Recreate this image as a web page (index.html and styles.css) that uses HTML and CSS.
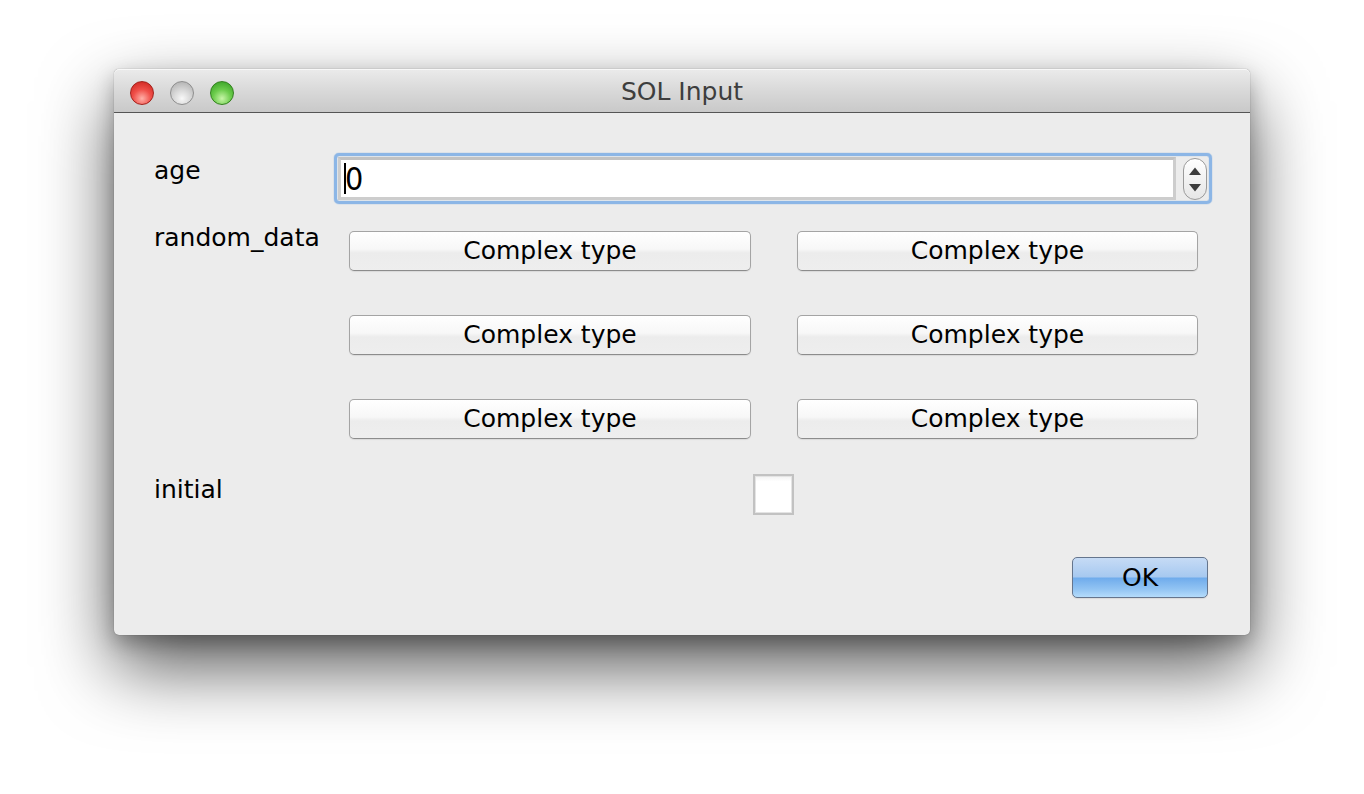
FILE: index.html
```html
<!DOCTYPE html>
<html>
<head>
<meta charset="utf-8">
<title>SOL Input</title>
<link rel="stylesheet" href="styles.css">
</head>
<body>
<div class="window">
  <div class="titlebar">
    <div class="lights">
      <span class="light red"></span>
      <span class="light gray"></span>
      <span class="light green"></span>
    </div>
    <div class="title">SOL Input</div>
  </div>
  <div class="content">
    <div class="row row-age">
      <div class="label label-age">age</div>
      <div class="focus-ring">
        <div class="textbox"><span class="caret"></span><span class="value">0</span></div>
        <div class="spinner">
          <svg width="24" height="42" viewBox="0 0 24 42">
            <path d="M6 17 L12 9.5 L18 17 Z" fill="#3c3c3c"/>
            <path d="M6 26 L12 33.5 L18 26 Z" fill="#3c3c3c"/>
          </svg>
        </div>
      </div>
    </div>
    <div class="row row-random">
      <div class="label">random_data</div>
      <div class="btn-grid">
        <button class="btn">Complex type</button>
        <button class="btn">Complex type</button>
        <button class="btn">Complex type</button>
        <button class="btn">Complex type</button>
        <button class="btn">Complex type</button>
        <button class="btn">Complex type</button>
      </div>
    </div>
    <div class="row row-initial">
      <div class="label label-initial">initial</div>
      <div class="check-area"><span class="checkbox"></span></div>
    </div>
    <div class="row row-ok">
      <button class="btn btn-ok">OK</button>
    </div>
  </div>
</div>
</body>
</html>
```

FILE: styles.css
```css
html, body {
  margin: 0;
  padding: 0;
  background: #ffffff;
}
body {
  width: 1364px;
  height: 794px;
  overflow: hidden;
  padding: 69px 0 0 114px;
  box-sizing: border-box;
  font-family: "DejaVu Sans", "Noto Sans", sans-serif;
}
.window {
  width: 1136px;
  background: #ececec;
  border-radius: 5px;
  box-shadow: 0 32px 72px rgba(0, 0, 0, 0.66), 0 8px 20px rgba(0, 0, 0, 0.25), 0 0 1px rgba(0, 0, 0, 0.5);
  overflow: hidden;
}
.titlebar {
  height: 43px;
  border-bottom: 1px solid #555555;
  background: linear-gradient(#ebebeb, #d9d9d9 50%, #c9c9c9);
  box-shadow: inset 0 1px 0 #f8f8f8;
  display: flex;
  align-items: center;
  position: relative;
  border-radius: 5px 5px 0 0;
}
.lights {
  display: flex;
  gap: 16px;
  margin-left: 16px;
  margin-top: 4px;
}
.light {
  width: 24px;
  height: 24px;
  border-radius: 50%;
  box-sizing: border-box;
}
.red {
  background: radial-gradient(circle at 50% 75%, #ffb0a8 0%, #f0504a 45%, #c81e18 100%);
  border: 1px solid #a2221d;
}
.gray {
  background: radial-gradient(circle at 50% 75%, #f8f8f8 0%, #d6d6d6 45%, #a8a8a8 100%);
  border: 1px solid #8e8e8e;
}
.green {
  background: radial-gradient(circle at 50% 75%, #c8f5a8 0%, #6ccc4c 45%, #2f9a1e 100%);
  border: 1px solid #33801f;
}
.title {
  position: absolute;
  left: 0;
  right: 0;
  top: 8px;
  text-align: center;
  font-size: 25px;
  line-height: 30px;
  color: #3e3e3e;
}
.content {
  padding: 40px 38px 37px 40px;
}
.row {
  display: flex;
  align-items: flex-start;
}
.label {
  width: 180px;
  flex: none;
  font-size: 25px;
  line-height: 30px;
  color: #000;
}
.label-age {
  margin-top: 3px;
}
.focus-ring {
  width: 878px;
  height: 51px;
  box-sizing: border-box;
  border: 3px solid #8cb6e6;
  border-radius: 5px;
  box-shadow: 0 0 1px 0 #4f8fd8, inset 0 0 1px #6aa0de;
  display: flex;
  align-items: center;
}
.textbox {
  flex: 1;
  height: 43px;
  margin-left: 1px;
  box-sizing: border-box;
  background: #ffffff;
  border: 3px solid #cdcdcd;
  border-top-color: #c2c2c2;
  display: flex;
  align-items: center;
  padding-left: 3px;
}
.caret {
  width: 2px;
  height: 31px;
  background: #000;
  flex: none;
}
.value {
  font-family: "DejaVu Sans Condensed", "DejaVu Sans", sans-serif;
  font-size: 32px;
  line-height: 36px;
  color: #000;
  margin-left: -1px;
}
.spinner {
  width: 24px;
  height: 42px;
  margin-left: 7px;
  margin-right: 2px;
  box-sizing: border-box;
  border: 1px solid #9a9a9a;
  border-radius: 12px;
  background: linear-gradient(#ffffff, #f2f2f2 50%, #e6e6e6);
  display: flex;
  align-items: center;
  justify-content: center;
  overflow: hidden;
}
.spinner svg {
  flex: none;
}
.row-random {
  margin-top: 19px;
}
.btn-grid {
  margin-left: 15px;
  margin-top: 8px;
  display: grid;
  grid-template-columns: 402px 401px;
  column-gap: 46px;
  row-gap: 44px;
}
.btn {
  height: 40px;
  margin: 0;
  padding: 0;
  box-sizing: border-box;
  border: 1px solid #a4a4a4;
  border-bottom-color: #8c8c8c;
  border-radius: 5px;
  background: linear-gradient(#ffffff, #f7f7f7 45%, #ececec 55%, #eeeeee);
  box-shadow: 0 1px 1px rgba(0, 0, 0, 0.08);
  font-family: "DejaVu Sans", "Noto Sans", sans-serif;
  font-size: 25px;
  line-height: 30px;
  color: #000;
  text-align: center;
}
.row-initial {
  margin-top: 35px;
}
.label-initial {
  margin-top: 1px;
}
.check-area {
  margin-left: 15px;
  width: 849px;
  display: flex;
  justify-content: center;
}
.checkbox {
  width: 41px;
  height: 41px;
  box-sizing: border-box;
  border: 2px solid #c2c2c2;
  background: linear-gradient(#f2f2f2, #ffffff 15%, #ffffff);
  box-shadow: inset 0 0 0 1px #e4e4e4;
}
.row-ok {
  margin-top: 42px;
  justify-content: flex-end;
}
.btn-ok {
  width: 136px;
  height: 41px;
  margin-right: 4px;
  border: 1px solid #65758d;
  border-radius: 5px;
  background: linear-gradient(#c6dbf5, #a7c9f0 48%, #70acec 52%, #92c4f3 80%, #b5dcfb);
}
```
